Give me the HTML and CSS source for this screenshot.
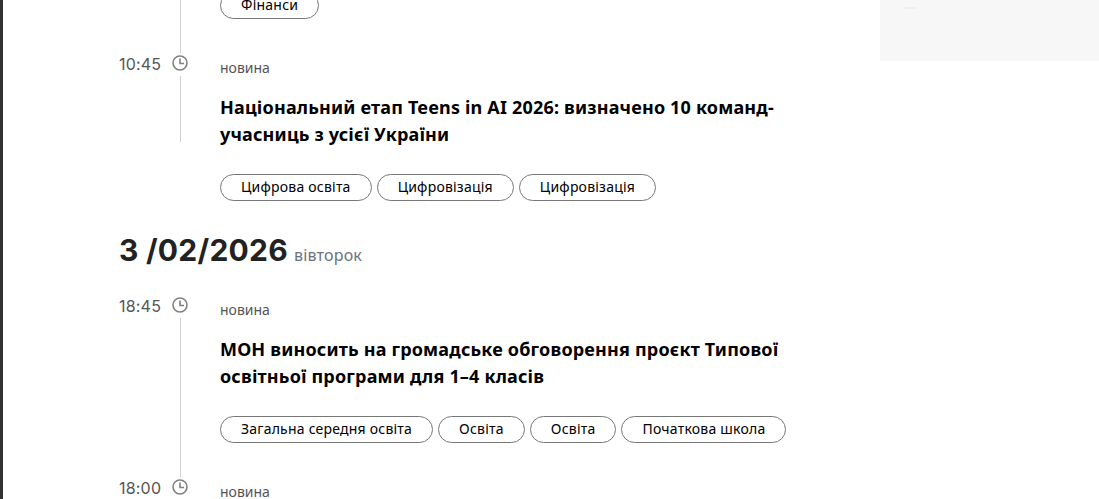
FILE: index.html
```html
<!DOCTYPE html>
<html lang="uk">
<head>
<meta charset="utf-8">
<title>Новини</title>
<link rel="stylesheet" href="styles.css">
</head>
<body>
<div class="page">
  <div class="edge"></div>
  <main class="feed">
    <article class="row row-cut">
      <div class="time"></div>
      <div class="rail"><span class="line"></span></div>
      <div class="body">
        <div class="tags"><a class="tag">Фінанси</a></div>
      </div>
    </article>
    <article class="row row-last">
      <div class="time">10:45</div>
      <div class="rail">
        <svg class="clock" viewBox="0 0 16 16"><circle cx="8" cy="8" r="7"/><path d="M8 3.5V8.5H12"/></svg>
        <span class="line"></span>
      </div>
      <div class="body">
        <div class="label">новина</div>
        <h2 class="title">Національний етап Teens in AI 2026: визначено 10 команд-учасниць з усієї України</h2>
        <div class="tags"><a class="tag">Цифрова освіта</a><a class="tag">Цифровізація</a><a class="tag">Цифровізація</a></div>
      </div>
    </article>
    <h1 class="day"><span class="date">3 /02/2026</span><span class="weekday">вівторок</span></h1>
    <article class="row">
      <div class="time">18:45</div>
      <div class="rail">
        <svg class="clock" viewBox="0 0 16 16"><circle cx="8" cy="8" r="7"/><path d="M8 3.5V8.5H12"/></svg>
        <span class="line"></span>
      </div>
      <div class="body">
        <div class="label">новина</div>
        <h2 class="title">МОН виносить на громадське обговорення проєкт Типової освітньої програми для 1–4 класів</h2>
        <div class="tags"><a class="tag">Загальна середня освіта</a><a class="tag">Освіта</a><a class="tag">Освіта</a><a class="tag">Початкова школа</a></div>
      </div>
    </article>
    <article class="row">
      <div class="time">18:00</div>
      <div class="rail">
        <svg class="clock" viewBox="0 0 16 16"><circle cx="8" cy="8" r="7"/><path d="M8 3.5V8.5H12"/></svg>
        <span class="line"></span>
      </div>
      <div class="body">
        <div class="label">новина</div>
      </div>
    </article>
  </main>
  <aside class="side"><span class="side-mark"></span></aside>
</div>
</body>
</html>
```
FILE: styles.css
```css
html, body {
  margin: 0;
  padding: 0;
  background: #fff;
}
body {
  font-family: "Noto Sans", "Open Sans", sans-serif;
  color: #000;
  overflow: hidden;
}
.page {
  display: flex;
  height: 499px;
  overflow: hidden;
}
.edge {
  flex: none;
  width: 3px;
  background: #333;
}
.feed {
  flex: 1;
  min-width: 0;
  margin-top: -8px;
  padding-left: 116px;
}
.row {
  display: flex;
}
.time {
  flex: none;
  width: 53px;
  margin-top: 0;
  font-family: Inter, "Noto Sans", sans-serif;
  font-size: 16px;
  letter-spacing: 0.2px;
  line-height: 18px;
  color: #555;
}
.rail {
  flex: none;
  width: 16px;
  display: flex;
  flex-direction: column;
  align-items: center;
}
.clock {
  flex: none;
  width: 16px;
  height: 16px;
  fill: none;
  stroke: #808080;
  stroke-width: 1.6;
}
.line {
  flex: 1;
  width: 1px;
  margin: 5px 0 2px;
  background: #d0d0d0;
}
.row-cut .line {
  margin-top: 0;
}
.row-last .line {
  flex: none;
  height: 66px;
}
.body {
  flex: 1;
  min-width: 0;
  margin-left: 32px;
  padding-bottom: 36px;
  max-width: 570px;
}
.row-last .body {
  padding-bottom: 29px;
}
.label {
  margin-top: 4px;
  font-size: 14px;
  line-height: 18px;
  color: #555;
}
.title {
  margin: 17px 0 0;
  font-size: 18px;
  line-height: 27px;
  font-weight: 700;
  letter-spacing: 0.18px;
  color: #000;
}
.tags {
  display: flex;
  gap: 5px;
  margin-top: 26px;
}
.row-cut .tags {
  margin-top: 0;
}
.tag {
  box-sizing: border-box;
  height: 27px;
  padding: 0 20px;
  border: 1px solid #777;
  border-radius: 14px;
  font-size: 14px;
  letter-spacing: 0.22px;
  line-height: 24px;
  color: #000;
  white-space: nowrap;
}
.day {
  display: flex;
  align-items: baseline;
  gap: 6px;
  margin: 0 0 22px;
  font-weight: 400;
  line-height: 40px;
}
.date {
  font-family: Inter, "Noto Sans", sans-serif;
  font-size: 30px;
  font-weight: 700;
  letter-spacing: 0.25px;
  color: #222;
}
.weekday {
  font-size: 16px;
  letter-spacing: 0.2px;
  color: #6b7280;
}
.side {
  flex: none;
  position: relative;
  width: 219px;
  height: 61px;
  background: #f7f7f7;
}
.side-mark {
  position: absolute;
  left: 25px;
  top: 7px;
  width: 12px;
  height: 2px;
  background: #efefef;
}
```
